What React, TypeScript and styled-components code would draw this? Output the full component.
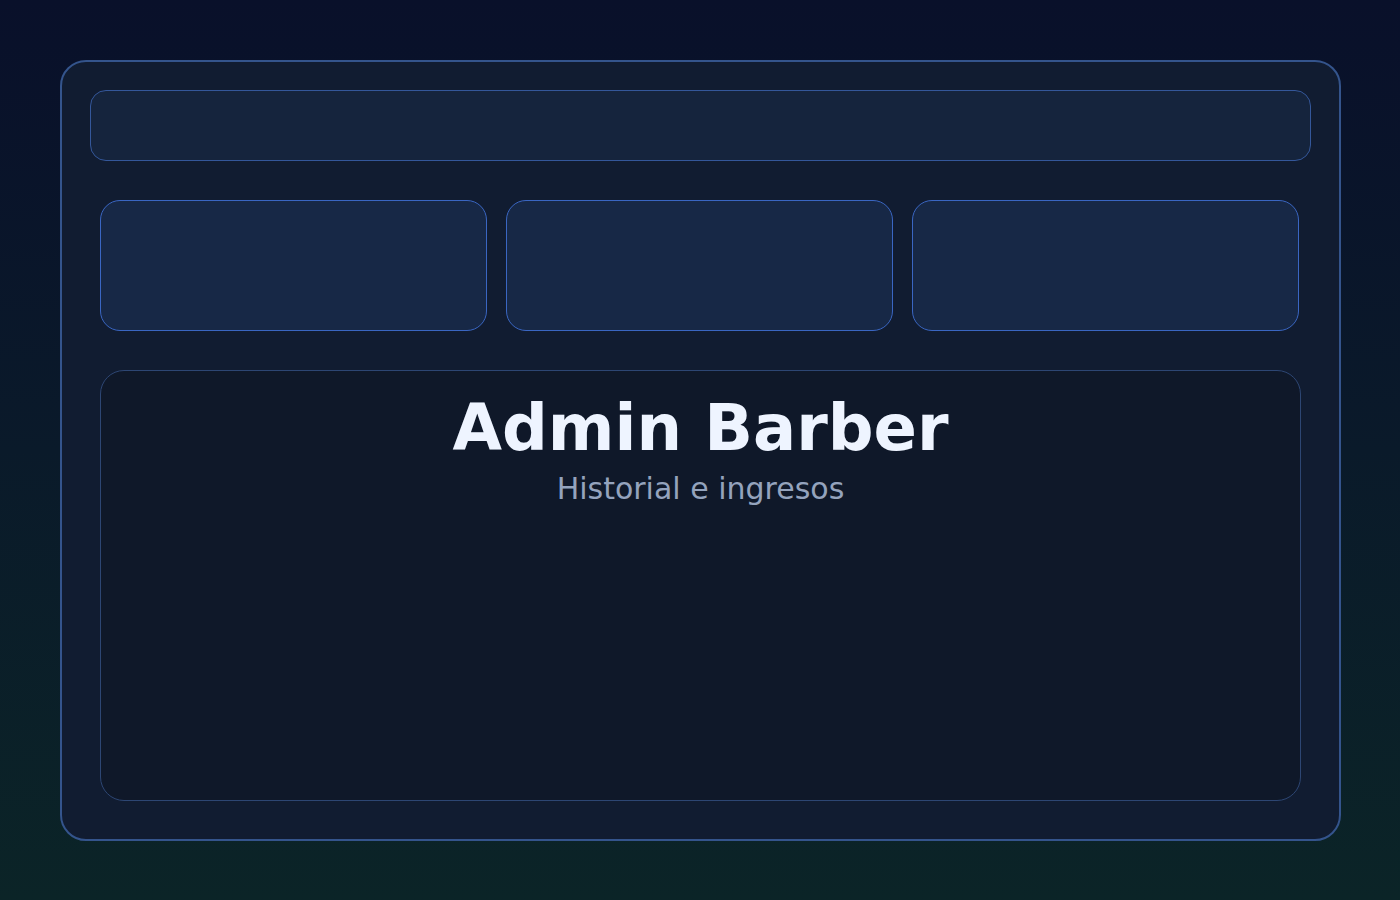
import React from 'react';
import styled, { createGlobalStyle } from 'styled-components';

const GlobalStyle = createGlobalStyle`
  html, body {
    margin: 0;
    padding: 0;
  }
  body {
    font-family: "DejaVu Sans", "Liberation Sans", sans-serif;
    background: linear-gradient(180deg, #09102a 0%, #0a1a2a 50%, #0b2427 100%);
    min-height: 900px;
  }
`;

const Page = styled.div`
  box-sizing: border-box;
  height: 900px;
  padding: 60px 59px 59px 60px;
`;

const Frame = styled.div`
  box-sizing: border-box;
  height: 781px;
  display: flex;
  flex-direction: column;
  padding: 28px 28px 38px;
  border: 2px solid #34548c;
  border-radius: 26px;
  background: #111c31;
`;

const TopBar = styled.div`
  height: 71px;
  flex: none;
  box-sizing: border-box;
  border: 1px solid #34579a;
  border-radius: 16px;
  background: #15243d;
`;

const Body = styled.div`
  flex: 1;
  display: flex;
  flex-direction: column;
  gap: 39px;
  margin-top: 39px;
  padding: 0 10px;
`;

const StatRow = styled.div`
  display: grid;
  grid-template-columns: repeat(3, 387px);
  gap: 19px;
  height: 131px;
`;

const StatCard = styled.div`
  box-sizing: border-box;
  border: 1px solid #3a66c2;
  border-radius: 20px;
  background: #172846;
`;

const Panel = styled.div`
  flex: 1;
  box-sizing: border-box;
  border: 1px solid #2d4673;
  border-radius: 24px;
  background: #0f1829;
  padding-top: 20px;
  display: flex;
  flex-direction: column;
  align-items: center;
`;

const Title = styled.h1`
  margin: 0;
  font-size: 64px;
  font-weight: 700;
  color: #eef4ff;
  line-height: normal;
`;

const Subtitle = styled.p`
  margin: 6px 0 0;
  font-size: 30px;
  color: #94a3bd;
  line-height: normal;
`;

export default function App() {
  return (
    <>
      <GlobalStyle />
      <Page>
        <Frame>
          <TopBar />
          <Body>
            <StatRow>
              <StatCard />
              <StatCard />
              <StatCard />
            </StatRow>
            <Panel>
              <Title>Admin Barber</Title>
              <Subtitle>Historial e ingresos</Subtitle>
            </Panel>
          </Body>
        </Frame>
      </Page>
    </>
  );
}
